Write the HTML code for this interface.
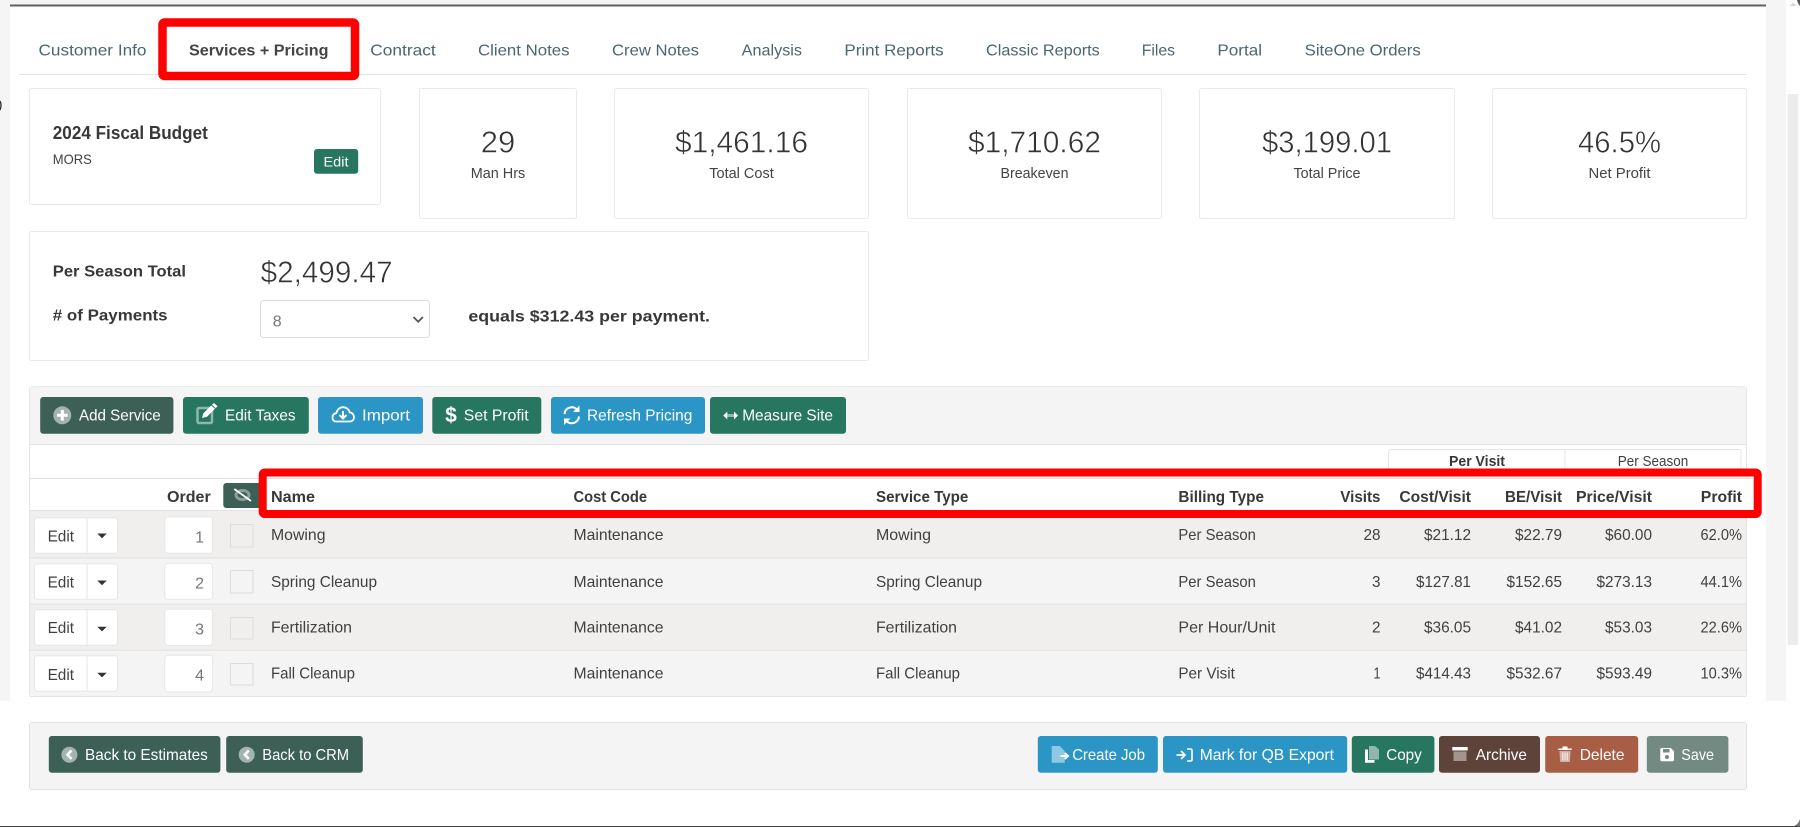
<!DOCTYPE html>
<html><head><meta charset="utf-8"><title>Services + Pricing</title>
<style>
html,body{margin:0;padding:0;background:#fff;width:1800px;height:827px;overflow:hidden}
svg{display:block;position:absolute;left:0;top:0}
text{font-family:"Liberation Sans",sans-serif;font-size:16px;fill:#404040}
.tab{fill:#4a6670;font-size:16px}
.b{font-weight:700;fill:#383838}
.th{font-weight:700;fill:#383838;font-size:15.5px}
.big{font-size:31px;fill:#333;text-anchor:middle;stroke:#fff;stroke-width:.55px}
.lbl{font-size:14.5px;fill:#444;text-anchor:middle}
.w{fill:#fff;font-size:16px}
.g{fill:#777}
.r{text-anchor:end}
.card{fill:#fff;stroke:#e9e9e9;stroke-width:1}
.ctl{fill:#fff;stroke:#e6e6e6;stroke-width:1}
.chk{fill:none;stroke:#dcdcdc;stroke-width:1}
</style></head>
<body>
<svg width="1800" height="827" viewBox="0 0 1800 827" xmlns="http://www.w3.org/2000/svg">
<!-- page frame -->
<rect x="0" y="0" width="1800" height="827" fill="#fff"/>
<rect x="0" y="0" width="1786" height="5" fill="#f5f5f5"/>
<rect x="0" y="0" width="10" height="701" fill="#f5f5f5"/>
<rect x="1766" y="0" width="20" height="701" fill="#f5f5f5"/>
<rect x="1787.700" y="94" width="10.500" height="551" fill="#ececec"/>
<path d="M1789.500 6l3.500-3.500 3.500 3.500z" fill="#d8d8d8"/>
<path d="M1797 0q.8 3.500 3 6V0z" fill="#555"/>
<path d="M1800 819q-1.500 5-6 7h6z" fill="#777"/>
<rect x="10" y="4.500" width="1756" height="2" fill="#606060"/>
<rect x="0" y="826" width="1800" height="1" fill="#444"/>
<path d="M0 101q2 4 0 9" fill="none" stroke="#333" stroke-width="1.400"/>

<!-- tabs -->
<rect x="19" y="74" width="1728" height="1" fill="#e5e5e5"/>
<text class="tab" x="38.500" y="55.500" textLength="108" lengthAdjust="spacingAndGlyphs">Customer Info</text>
<rect x="162.500" y="22.500" width="192.500" height="53.500" rx="2" fill="#fff" stroke="#f00" stroke-width="8.500"/>
<text class="tab b" x="189" y="55.500" textLength="139.500" lengthAdjust="spacingAndGlyphs" style="fill:#444">Services + Pricing</text>
<text class="tab" x="370.300" y="55.500" textLength="65.400" lengthAdjust="spacingAndGlyphs">Contract</text>
<text class="tab" x="478" y="55.500" textLength="91.500" lengthAdjust="spacingAndGlyphs">Client Notes</text>
<text class="tab" x="612" y="55.500" textLength="87" lengthAdjust="spacingAndGlyphs">Crew Notes</text>
<text class="tab" x="741.700" y="55.500" textLength="60.300" lengthAdjust="spacingAndGlyphs">Analysis</text>
<text class="tab" x="844.400" y="55.500" textLength="99.200" lengthAdjust="spacingAndGlyphs">Print Reports</text>
<text class="tab" x="986" y="55.500" textLength="113.800" lengthAdjust="spacingAndGlyphs">Classic Reports</text>
<text class="tab" x="1141.700" y="55.500" textLength="33.300" lengthAdjust="spacingAndGlyphs">Files</text>
<text class="tab" x="1217.400" y="55.500" textLength="44.600" lengthAdjust="spacingAndGlyphs">Portal</text>
<text class="tab" x="1304.700" y="55.500" textLength="116" lengthAdjust="spacingAndGlyphs">SiteOne Orders</text>

<!-- cards -->
<rect class="card" x="29.500" y="88.500" width="351" height="116" rx="2"/>
<text class="b" x="52.800" y="139" style="font-size:18px" textLength="155" lengthAdjust="spacingAndGlyphs">2024 Fiscal Budget</text>
<text x="52.800" y="164" style="font-size:14px" textLength="39" lengthAdjust="spacingAndGlyphs">MORS</text>
<rect x="314" y="149" width="44.200" height="24.700" rx="3" fill="#277660"/>
<text class="w" x="336" y="166.500" text-anchor="middle" style="font-size:14px" textLength="25" lengthAdjust="spacingAndGlyphs">Edit</text>

<rect class="card" x="419.500" y="88.500" width="157" height="130" rx="2"/>
<text class="big" x="498" y="152.700">29</text>
<text class="lbl" x="498" y="178" textLength="54.500" lengthAdjust="spacingAndGlyphs">Man Hrs</text>
<rect class="card" x="614.500" y="88.500" width="254" height="130" rx="2"/>
<text class="big" x="741.500" y="152.700" textLength="133" lengthAdjust="spacingAndGlyphs">$1,461.16</text>
<text class="lbl" x="741.500" y="178" textLength="64.500" lengthAdjust="spacingAndGlyphs">Total Cost</text>
<rect class="card" x="907.500" y="88.500" width="254" height="130" rx="2"/>
<text class="big" x="1034.500" y="152.700" textLength="133" lengthAdjust="spacingAndGlyphs">$1,710.62</text>
<text class="lbl" x="1034.500" y="178" textLength="68" lengthAdjust="spacingAndGlyphs">Breakeven</text>
<rect class="card" x="1199.500" y="88.500" width="255" height="130" rx="2"/>
<text class="big" x="1327" y="152.700" textLength="130" lengthAdjust="spacingAndGlyphs">$3,199.01</text>
<text class="lbl" x="1327" y="178" textLength="67" lengthAdjust="spacingAndGlyphs">Total Price</text>
<rect class="card" x="1492.500" y="88.500" width="254" height="130" rx="2"/>
<text class="big" x="1619.500" y="152.700" textLength="83" lengthAdjust="spacingAndGlyphs">46.5%</text>
<text class="lbl" x="1619.500" y="178" textLength="62" lengthAdjust="spacingAndGlyphs">Net Profit</text>

<!-- season card -->
<rect class="card" x="29.500" y="231.500" width="839" height="129" rx="2"/>
<text class="b" x="52.800" y="276.700" textLength="133.200" lengthAdjust="spacingAndGlyphs">Per Season Total</text>
<text class="big" x="326.600" y="282.700" textLength="132" lengthAdjust="spacingAndGlyphs">$2,499.47</text>
<text class="b" x="52.800" y="320.700" textLength="114.800" lengthAdjust="spacingAndGlyphs"># of Payments</text>
<rect x="260.500" y="300.500" width="169" height="37" rx="3" fill="#fff" stroke="#ddd"/>
<text class="g" x="272.700" y="326.700">8</text>
<path d="M413.500 317l4.700 4.700 4.700-4.700" fill="none" stroke="#555" stroke-width="1.800"/>
<text class="b" x="468.400" y="321.700" textLength="241.600" lengthAdjust="spacingAndGlyphs">equals $312.43 per payment.</text>

<!-- table panel -->
<rect x="29.500" y="386.500" width="1717" height="310" rx="3" fill="#fff" stroke="#e5e5e5"/>
<path d="M30 444V389q0-2.500 2.500-2.500H1743.500q2.500 0 2.500 2.500V444z" fill="#f4f4f4"/>
<rect x="30" y="444" width="1716" height="1" fill="#e2e2e2"/>

<!-- toolbar buttons -->
<rect x="40.200" y="397" width="133.200" height="36.700" rx="3" fill="#3c5f56"/>
<circle cx="62.300" cy="415.300" r="9" fill="#a3b3ae"/>
<path d="M62.300 410v10.600M57 415.300h10.600" stroke="#fff" stroke-width="3"/>
<text class="w" x="79" y="420.700" textLength="81.700" lengthAdjust="spacingAndGlyphs">Add Service</text>

<rect x="183" y="397" width="125.800" height="36.700" rx="3" fill="#277660"/>
<rect x="197.500" y="408" width="14.500" height="15" rx="1.500" fill="none" stroke="#8db8ab" stroke-width="2.500"/>
<path d="M202 418l1.200-4.500 8-8 3.800 3.300-8 8z" fill="#fff"/><path d="M212 404.800l2-1.800 3.500 3.300-1.800 1.800z" fill="#fff"/>
<text class="w" x="225" y="420.700" textLength="70.600" lengthAdjust="spacingAndGlyphs">Edit Taxes</text>

<rect x="318" y="397" width="105" height="36.700" rx="3" fill="#2b96c5"/>
<path d="M336.500 421.500h-0.500c-3 0-3.500-2.500-3.500-4 0-2.500 1.500-4 3.800-4.300 .8-3.500 3.300-6 6.700-6 3.500 0 6 2.300 6.700 5.200 2.800 .2 4.300 2.500 4.300 5 0 2.500-1.800 4.100-4 4.100z" fill="none" stroke="#fff" stroke-width="1.800"/>
<path d="M343 411v7m-3.500-3l3.500 3.500 3.500-3.500" fill="none" stroke="#fff" stroke-width="2"/>
<text class="w" x="362" y="420.700" textLength="48" lengthAdjust="spacingAndGlyphs">Import</text>

<rect x="432.300" y="397" width="109" height="36.700" rx="3" fill="#277660"/>
<text class="w" x="451" y="422" text-anchor="middle" style="font-size:21px;font-weight:700">$</text>
<text class="w" x="463.800" y="420.700" textLength="64.900" lengthAdjust="spacingAndGlyphs">Set Profit</text>

<rect x="551" y="397" width="154" height="36.700" rx="3" fill="#2b96c5"/>
<path d="M564.500 414a7.300 7.300 0 0 1 12.500-4.500" fill="none" stroke="#fff" stroke-width="2"/>
<path d="M579 416.500a7.300 7.300 0 0 1-12.500 4.500" fill="none" stroke="#fff" stroke-width="2"/>
<path d="M579.500 405.500v6.500h-6.500z" fill="#fff"/><path d="M564 425v-6.500h6.500z" fill="#fff"/>
<text class="w" x="587" y="420.700" textLength="105.300" lengthAdjust="spacingAndGlyphs">Refresh Pricing</text>

<rect x="710" y="397" width="136" height="36.700" rx="3" fill="#277660"/>
<path d="M726 414h9v3h-9z" fill="#8db8ab"/>
<path d="M723.300 415.500l4-4v8zM738 415.500l-4-4v8z" fill="#fff"/>
<text class="w" x="742.200" y="420.700" textLength="90.800" lengthAdjust="spacingAndGlyphs">Measure Site</text>

<!-- Per visit toggle -->
<path d="M1388.500 472v-20q0-2.500 2.500-2.500H1738.500q2.500 0 2.500 2.500V472" fill="#fff" stroke="#e5e5e5"/>
<rect x="1564.500" y="450" width="1" height="22" fill="#e5e5e5"/>
<text class="b" x="1477" y="466" text-anchor="middle" style="font-size:14.500px" textLength="56" lengthAdjust="spacingAndGlyphs">Per Visit</text>
<text x="1653" y="466" text-anchor="middle" style="font-size:14.500px" textLength="70.500" lengthAdjust="spacingAndGlyphs">Per Season</text>

<!-- table header -->
<rect x="30" y="478" width="1716" height="1" fill="#e2e2e2"/>
<rect x="30" y="510" width="1716" height="1" fill="#e2e2e2"/>
<text class="th" x="167" y="502" textLength="43.700" lengthAdjust="spacingAndGlyphs">Order</text>
<rect x="223.300" y="483" width="40" height="25" rx="3" fill="#3c5f56"/>
<ellipse cx="242.500" cy="495" rx="6.500" ry="4.500" fill="none" stroke="#8a9f99" stroke-width="3"/>
<path d="M234.300 489L251 501" stroke="#fff" stroke-width="1.800"/>

<!-- rows -->
<rect x="30" y="511" width="1716" height="47" fill="#f0efee"/>
<rect x="30" y="558" width="1716" height="46" fill="#f5f4f5"/>
<rect x="30" y="604" width="1716" height="46" fill="#f0efee"/>
<rect x="30" y="650" width="1716" height="46" fill="#f5f4f5"/>
<rect x="30" y="557.500" width="1716" height="1" fill="#e2e2e2"/>
<rect x="30" y="603.700" width="1716" height="1" fill="#e2e2e2"/>
<rect x="30" y="649.800" width="1716" height="1" fill="#e2e2e2"/>
<rect x="30" y="696" width="1716" height="1" fill="#e2e2e2"/>

<!-- red header box -->
<rect x="262.700" y="472.500" width="1495" height="41.500" rx="2" fill="#fff" stroke="#f00" stroke-width="8"/>
<rect x="267" y="478" width="1487" height="1" fill="#e2e2e2"/>
<text class="th" x="271" y="502" textLength="44" lengthAdjust="spacingAndGlyphs">Name</text>
<text class="th" x="573.500" y="502" textLength="73.500" lengthAdjust="spacingAndGlyphs">Cost Code</text>
<text class="th" x="876" y="502" textLength="92.300" lengthAdjust="spacingAndGlyphs">Service Type</text>
<text class="th" x="1178.400" y="502" textLength="85.600" lengthAdjust="spacingAndGlyphs">Billing Type</text>
<text class="th r" x="1380.500" y="502" textLength="40.200" lengthAdjust="spacingAndGlyphs">Visits</text>
<text class="th r" x="1471" y="502" textLength="71.600" lengthAdjust="spacingAndGlyphs">Cost/Visit</text>
<text class="th r" x="1562" y="502" textLength="57" lengthAdjust="spacingAndGlyphs">BE/Visit</text>
<text class="th r" x="1652" y="502" textLength="76" lengthAdjust="spacingAndGlyphs">Price/Visit</text>
<text class="th r" x="1742" y="502" textLength="41.200" lengthAdjust="spacingAndGlyphs">Profit</text>

<!-- row 1 -->
<rect class="ctl" x="34.500" y="517.700" width="83" height="35.600" rx="3"/><rect x="86.500" y="518" width="1" height="35" fill="#e6e6e6"/>
<text x="47.600" y="541.300" textLength="26.400" lengthAdjust="spacingAndGlyphs">Edit</text><path d="M97.300 533.500h9.400l-4.700 4.700z" fill="#333"/>
<rect class="ctl" x="164.800" y="516.700" width="47.600" height="36.600" rx="3"/>
<text class="g r" x="204" y="542.300">1</text>
<rect class="chk" x="230.500" y="524.500" width="22.500" height="22.500"/>
<text x="271" y="540" textLength="54.500" lengthAdjust="spacingAndGlyphs">Mowing</text>
<text x="573.500" y="540" textLength="90" lengthAdjust="spacingAndGlyphs">Maintenance</text>
<text x="876" y="540" textLength="55" lengthAdjust="spacingAndGlyphs">Mowing</text>
<text x="1178.400" y="540" textLength="77.500" lengthAdjust="spacingAndGlyphs">Per Season</text>
<text class="r" x="1380.500" y="540" textLength="17" lengthAdjust="spacingAndGlyphs">28</text>
<text class="r" x="1471" y="540" textLength="47" lengthAdjust="spacingAndGlyphs">$21.12</text>
<text class="r" x="1562" y="540" textLength="47" lengthAdjust="spacingAndGlyphs">$22.79</text>
<text class="r" x="1652" y="540" textLength="47" lengthAdjust="spacingAndGlyphs">$60.00</text>
<text class="r" x="1742" y="540" textLength="41.500" lengthAdjust="spacingAndGlyphs">62.0%</text>

<!-- row 2 -->
<rect class="ctl" x="34.500" y="563.700" width="83" height="35.600" rx="3"/><rect x="86.500" y="564" width="1" height="35" fill="#e6e6e6"/>
<text x="47.600" y="587.300" textLength="26.400" lengthAdjust="spacingAndGlyphs">Edit</text><path d="M97.300 580.500h9.400l-4.700 4.700z" fill="#333"/>
<rect class="ctl" x="164.800" y="563.300" width="47.600" height="36.100" rx="3"/>
<text class="g r" x="204" y="588.300">2</text>
<rect class="chk" x="230.500" y="570.500" width="22.500" height="22.500"/>
<text x="271" y="587" textLength="106" lengthAdjust="spacingAndGlyphs">Spring Cleanup</text>
<text x="573.500" y="587" textLength="90" lengthAdjust="spacingAndGlyphs">Maintenance</text>
<text x="876" y="587" textLength="106" lengthAdjust="spacingAndGlyphs">Spring Cleanup</text>
<text x="1178.400" y="587" textLength="77.500" lengthAdjust="spacingAndGlyphs">Per Season</text>
<text class="r" x="1380.500" y="587" textLength="8.500" lengthAdjust="spacingAndGlyphs">3</text>
<text class="r" x="1471" y="587" textLength="55" lengthAdjust="spacingAndGlyphs">$127.81</text>
<text class="r" x="1562" y="587" textLength="55.500" lengthAdjust="spacingAndGlyphs">$152.65</text>
<text class="r" x="1652" y="587" textLength="55.500" lengthAdjust="spacingAndGlyphs">$273.13</text>
<text class="r" x="1742" y="587" textLength="41.500" lengthAdjust="spacingAndGlyphs">44.1%</text>

<!-- row 3 -->
<rect class="ctl" x="34.500" y="609.700" width="83" height="35.600" rx="3"/><rect x="86.500" y="610" width="1" height="35" fill="#e6e6e6"/>
<text x="47.600" y="632.900" textLength="26.400" lengthAdjust="spacingAndGlyphs">Edit</text><path d="M97.300 626.700h9.400l-4.700 4.700z" fill="#333"/>
<rect class="ctl" x="164.800" y="609.300" width="47.600" height="36.100" rx="3"/>
<text class="g r" x="204" y="634.300">3</text>
<rect class="chk" x="230.500" y="617.500" width="22.500" height="21.500"/>
<text x="271" y="632.700" textLength="81" lengthAdjust="spacingAndGlyphs">Fertilization</text>
<text x="573.500" y="632.700" textLength="90" lengthAdjust="spacingAndGlyphs">Maintenance</text>
<text x="876" y="632.700" textLength="81" lengthAdjust="spacingAndGlyphs">Fertilization</text>
<text x="1178.400" y="632.700" textLength="97" lengthAdjust="spacingAndGlyphs">Per Hour/Unit</text>
<text class="r" x="1380.500" y="632.700" textLength="8.500" lengthAdjust="spacingAndGlyphs">2</text>
<text class="r" x="1471" y="632.700" textLength="47" lengthAdjust="spacingAndGlyphs">$36.05</text>
<text class="r" x="1562" y="632.700" textLength="47" lengthAdjust="spacingAndGlyphs">$41.02</text>
<text class="r" x="1652" y="632.700" textLength="47" lengthAdjust="spacingAndGlyphs">$53.03</text>
<text class="r" x="1742" y="632.700" textLength="41.500" lengthAdjust="spacingAndGlyphs">22.6%</text>

<!-- row 4 -->
<rect class="ctl" x="34.500" y="655.700" width="83" height="35.600" rx="3"/><rect x="86.500" y="656" width="1" height="35" fill="#e6e6e6"/>
<text x="47.600" y="680" textLength="26.400" lengthAdjust="spacingAndGlyphs">Edit</text><path d="M97.300 672.700h9.400l-4.700 4.700z" fill="#333"/>
<rect class="ctl" x="164.800" y="655.300" width="47.600" height="36.700" rx="3"/>
<text class="g r" x="204" y="680.300">4</text>
<rect class="chk" x="230.500" y="663.500" width="22.500" height="21.500"/>
<text x="271" y="678.700" textLength="84" lengthAdjust="spacingAndGlyphs">Fall Cleanup</text>
<text x="573.500" y="678.700" textLength="90" lengthAdjust="spacingAndGlyphs">Maintenance</text>
<text x="876" y="678.700" textLength="84" lengthAdjust="spacingAndGlyphs">Fall Cleanup</text>
<text x="1178.400" y="678.700" textLength="56.500" lengthAdjust="spacingAndGlyphs">Per Visit</text>
<text class="r" x="1380.500" y="678.700" textLength="7" lengthAdjust="spacingAndGlyphs">1</text>
<text class="r" x="1471" y="678.700" textLength="55" lengthAdjust="spacingAndGlyphs">$414.43</text>
<text class="r" x="1562" y="678.700" textLength="55.500" lengthAdjust="spacingAndGlyphs">$532.67</text>
<text class="r" x="1652" y="678.700" textLength="55.500" lengthAdjust="spacingAndGlyphs">$593.49</text>
<text class="r" x="1742" y="678.700" textLength="41.500" lengthAdjust="spacingAndGlyphs">10.3%</text>

<!-- bottom panel -->
<rect x="29.500" y="722.500" width="1717" height="67" rx="3" fill="#f4f4f4" stroke="#e3e3e3"/>

<rect x="48.800" y="736" width="171.600" height="36.700" rx="3" fill="#3c5f56"/>
<circle cx="69.400" cy="754.700" r="8" fill="#a3b3ae"/><path d="M71.500 750.500l-4 4.200 4 4.200" fill="none" stroke="#fff" stroke-width="2.600"/>
<text class="w" x="85" y="760.200" textLength="122.800" lengthAdjust="spacingAndGlyphs">Back to Estimates</text>

<rect x="226.200" y="736" width="136.600" height="36.700" rx="3" fill="#3c5f56"/>
<circle cx="246.700" cy="754.700" r="8" fill="#a3b3ae"/><path d="M248.800 750.500l-4 4.200 4 4.200" fill="none" stroke="#fff" stroke-width="2.600"/>
<text class="w" x="262.300" y="760.200" textLength="86.700" lengthAdjust="spacingAndGlyphs">Back to CRM</text>

<rect x="1037.800" y="736" width="120" height="36.700" rx="3" fill="#2b96c5"/>
<path d="M1051.700 746h8l5 5v11.700h-13z" fill="#8ec8e3"/>
<path d="M1060.500 756h7m-2.800-3l3.300 3-3.300 3" fill="none" stroke="#fff" stroke-width="2"/>
<text class="w" x="1072.200" y="760.200" textLength="72.800" lengthAdjust="spacingAndGlyphs">Create Job</text>

<rect x="1163" y="736" width="184.200" height="36.700" rx="3" fill="#2b96c5"/>
<path d="M1176.500 755h8m-3.500-4l4 4-4 4" fill="none" stroke="#fff" stroke-width="1.800"/>
<path d="M1187 749h3.500q1.500 0 1.500 1.500v9q0 1.500-1.500 1.500H1187" fill="none" stroke="#fff" stroke-width="1.600"/>
<text class="w" x="1199.700" y="760.200" textLength="134.300" lengthAdjust="spacingAndGlyphs">Mark for QB Export</text>

<rect x="1351.800" y="736" width="82.600" height="36.700" rx="3" fill="#277660"/>
<path d="M1365 749.500h3v10.500h6.500v2.700H1365z" fill="#fff"/>
<path d="M1369 746h6l4 3.500v10h-10z" fill="#8db8ab"/>
<text class="w" x="1386.200" y="760.200" textLength="35.600" lengthAdjust="spacingAndGlyphs">Copy</text>

<rect x="1439" y="736" width="101" height="36.700" rx="3" fill="#5d4339"/>
<rect x="1452.300" y="747" width="15.400" height="3.500" fill="#fff"/>
<rect x="1453.500" y="751.500" width="13" height="9.500" fill="#a3948d"/>
<text class="w" x="1475.800" y="760.200" textLength="51.100" lengthAdjust="spacingAndGlyphs">Archive</text>

<rect x="1545.200" y="736" width="93" height="36.700" rx="3" fill="#a85e45"/>
<path d="M1558.300 748.500h13.400v1.500h-13.400zM1562.500 746.500h5v2h-5z" fill="#fff"/>
<path d="M1559.500 751h11l-.6 11h-9.800z" fill="#d2b0a3"/>
<path d="M1562.800 752.500v8m2.200-8v8m2.200-8v8" stroke="#fff" stroke-width=".9"/>
<text class="w" x="1579.700" y="760.200" textLength="44.800" lengthAdjust="spacingAndGlyphs">Delete</text>

<rect x="1646.800" y="736" width="81.600" height="36.700" rx="3" fill="#738a83"/>
<path d="M1660.300 749.500q0-1.500 1.500-1.500h9l3.200 3.200v8.600q0 1.500-1.500 1.500h-10.700q-1.500 0-1.500-1.500z" fill="#fff"/>
<rect x="1663" y="749" width="6.500" height="3.500" fill="#738a83"/>
<circle cx="1667" cy="757" r="2" fill="#738a83"/>
<text class="w" x="1681.300" y="760.200" textLength="32.700" lengthAdjust="spacingAndGlyphs">Save</text>
</svg>
</body></html>
